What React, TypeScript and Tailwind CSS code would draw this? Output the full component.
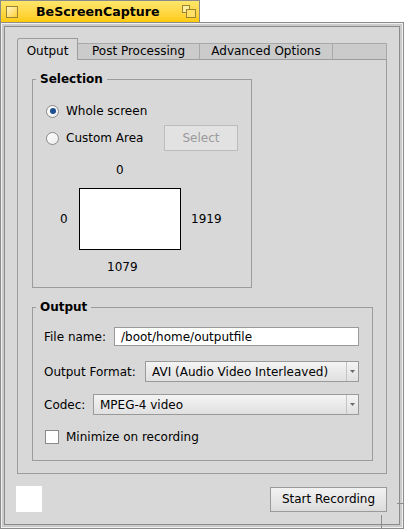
import React from "react";

function Radio({ checked }: { checked?: boolean }) {
  return (
    <span className="w-[13px] h-[13px] rounded-full border border-[#8a8a8a] bg-linear-to-br from-white to-[#ececec] flex items-center justify-center shrink-0">
      {checked && <span className="w-[6px] h-[6px] rounded-full bg-[#1b4f8f]" />}
    </span>
  );
}

function MenuField({ text, width }: { text: string; width: string }) {
  return (
    <div className={`${width} h-[21px] border border-[#9a9a9a] bg-linear-to-b from-[#f4f4f4] to-[#e0e0e0] flex items-stretch`}>
      <div className="flex-1 flex items-center pl-[6px] leading-[14px]">{text}</div>
      <div className="w-[12px] border-l border-[#c4c4c4] flex items-center justify-center">
        <svg width="5" height="3" viewBox="0 0 5 3">
          <path d="M0 0 H5 L2.5 3 Z" fill="#6a6a6a" />
        </svg>
      </div>
    </div>
  );
}

export default function App() {
  return (
    <div className="w-[404px] h-[529px] bg-white flex flex-col font-['DejaVu_Sans',sans-serif] text-[12px] text-black leading-[14px]">
      {/* Title tab */}
      <div className="w-[200px] h-[22px] border border-b-0 border-[#8a8a8a] bg-linear-to-b from-[#ffe669] to-[#ffcb00] flex items-center shrink-0">
        <div className="w-[35px] h-full flex items-center pl-[5px] shrink-0">
          <span className="w-[12px] h-[12px] border border-[#9a8434] bg-linear-to-br from-[#fff6c0] to-[#ffcc10]" />
        </div>
        <div className="flex-1 font-bold text-[12.6px] leading-[14px] whitespace-nowrap">BeScreenCapture</div>
        <div className="w-[17px] h-full flex items-center shrink-0">
          <svg width="14" height="14" viewBox="0 0 14 14">
            <rect x="0.5" y="0.5" width="7" height="7" fill="#fff0a0" stroke="#9a8434" />
            <rect x="4.5" y="4.5" width="9" height="8" fill="#ffe066" stroke="#9a8434" />
          </svg>
        </div>
      </div>

      {/* Window frame */}
      <div className="relative flex-1 flex border border-[#8c8c8c]">
        <div className="flex-1 flex border border-[#efefef]">
          <div className="flex-1 flex border-2 border-[#cbcbcb]">
            <div className="flex-1 flex flex-col border border-[#8c8c8c] bg-[#d8d8d8] pt-[11px]">
              {/* Tab view */}
              <div className="mx-[12px] flex flex-col">
                <div className="flex items-end h-[21px]">
                  <div className="relative z-10 -mb-px w-[61px] h-[22px] border border-b-0 border-[#9c9c9c] rounded-tl-[3px] bg-[#d8d8d8] flex items-end justify-center pb-[2px]">
                    Output
                  </div>
                  <div className="w-[122px] h-[16px] border-t border-r border-[#a8a8a8] bg-[#cbcbcb] flex items-end justify-center pb-[1px]">
                    Post Processing
                  </div>
                  <div className="w-[133px] h-[16px] border-t border-r border-[#a8a8a8] bg-[#cbcbcb] flex items-end justify-center pb-[1px]">
                    Advanced Options
                  </div>
                  <div className="w-[54px] h-[16px] border-t border-r border-[#a8a8a8] bg-[#cbcbcb]" />
                </div>
                <div className="h-[415px] border border-[#9c9c9c] bg-[#d8d8d8] pl-[14px] pt-[19px] flex flex-col">
                  {/* Selection box */}
                  <div className="relative w-[220px] border border-[#9c9c9c] flex flex-col pl-[13px] pr-[13px] pt-[18px] pb-[13px]">
                    <span className="absolute left-[3px] top-[-8px] px-[4px] bg-[#d8d8d8] font-bold">Selection</span>
                    <div className="h-[26px] flex items-center">
                      <Radio checked />
                      <span className="ml-[7px]">Whole screen</span>
                    </div>
                    <div className="mt-[1px] h-[26px] flex items-center">
                      <Radio />
                      <span className="ml-[7px]">Custom Area</span>
                      <div className="ml-auto w-[74px] h-[26px] border border-[#bcbcbc] bg-[#e2e2e2] text-[#9a9a9a] flex items-center justify-center">
                        Select
                      </div>
                    </div>
                    <div className="mt-[12px] ml-[70px]">0</div>
                    <div className="mt-[11px] flex items-center">
                      <span className="ml-[14px] w-[8px]">0</span>
                      <div className="ml-[11px] w-[102px] h-[62px] border border-black bg-white" />
                      <span className="ml-[10px]">1919</span>
                    </div>
                    <div className="mt-[10px] ml-[61px]">1079</div>
                  </div>

                  {/* Output box */}
                  <div className="relative mt-[19px] w-[341px] border border-[#9c9c9c] flex flex-col pl-[11px] pr-[13px] pt-[19px] pb-[16px]">
                    <span className="absolute left-[3px] top-[-8px] px-[4px] bg-[#d8d8d8] font-bold">Output</span>
                    <div className="flex items-center">
                      <span>File name:</span>
                      <div className="ml-auto w-[245px] h-[19px] border border-[#9a9a9a] bg-white flex items-center pl-[6px]">
                        /boot/home/outputfile
                      </div>
                    </div>
                    <div className="mt-[15px] flex items-center">
                      <span>Output Format:</span>
                      <span className="flex-1" />
                      <MenuField text="AVI (Audio Video Interleaved)" width="w-[214px]" />
                    </div>
                    <div className="mt-[12px] flex items-center">
                      <span>Codec:</span>
                      <span className="flex-1" />
                      <MenuField text="MPEG-4 video" width="w-[266px]" />
                    </div>
                    <div className="mt-[15px] flex items-center pl-[1px]">
                      <span className="w-[14px] h-[14px] border border-[#8a8a8a] bg-white shrink-0" />
                      <span className="ml-[7px]">Minimize on recording</span>
                    </div>
                  </div>
                </div>
              </div>

              {/* Bottom row */}
              <div className="mt-[12px] flex items-center pl-[11px] pr-[12px]">
                <div className="w-[26px] h-[26px] bg-white" />
                <span className="flex-1" />
                <div className="w-[117px] h-[25px] border border-[#999999] bg-linear-to-b from-[#f2f2f2] to-[#dcdcdc] flex items-center justify-center">
                  Start Recording
                </div>
              </div>
            </div>
          </div>
        </div>
        {/* resize knob notches */}
        <div className="absolute left-[380px] bottom-[-1px] w-px h-[14px] bg-[#8c8c8c]" />
        <div className="absolute right-[-1px] bottom-[24px] w-[7px] h-px bg-[#8c8c8c]" />
      </div>
    </div>
  );
}
